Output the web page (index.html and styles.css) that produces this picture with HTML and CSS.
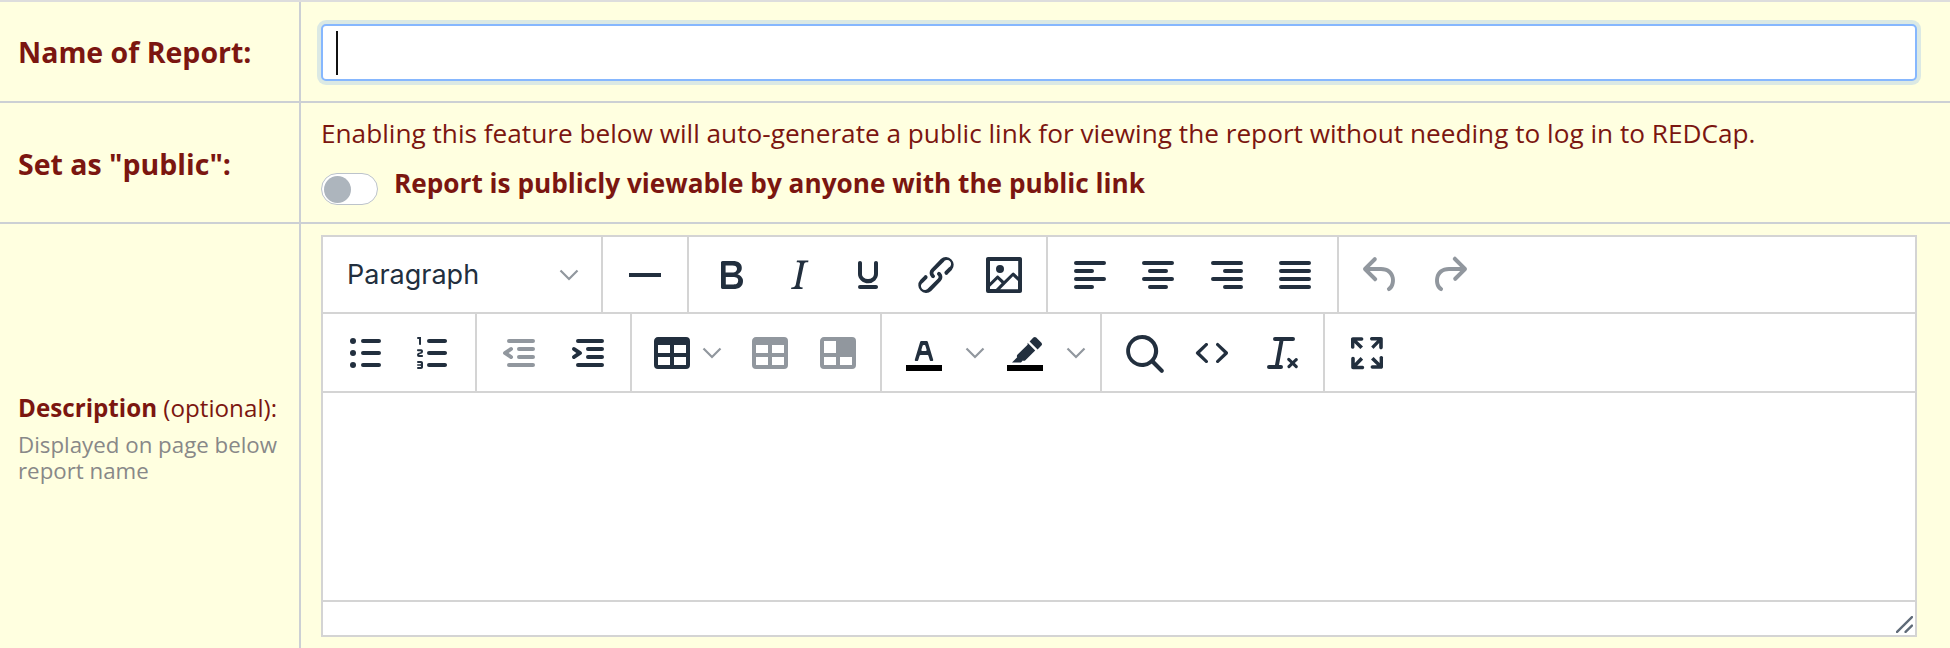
FILE: index.html
```html
<!DOCTYPE html>
<html lang="en">
<head>
  <meta charset="UTF-8">
  <title>Create Report</title>
  <link rel="stylesheet" href="styles.css">
</head>
<body>
  <svg class="sprite" xmlns="http://www.w3.org/2000/svg">
    <symbol id="i-hr" viewBox="0 0 24 24"><path d="M4 11h16v2H4z"/></symbol>
    <symbol id="i-bold" viewBox="0 0 24 24"><path d="M7.8 19c-.3 0-.5 0-.6-.2l-.2-.5V5.7c0-.2 0-.4.2-.5l.6-.2h5c1.5 0 2.7.3 3.5 1 .7.6 1.1 1.4 1.1 2.5a3 3 0 01-.6 1.9c-.4.6-1 1-1.6 1.2.4.1.9.3 1.3.6s.8.7 1 1.2c.4.4.5 1 .5 1.6 0 1.3-.4 2.3-1.3 3-.8.7-2.1 1-3.8 1H7.8zm5-8.3c.6 0 1.2-.1 1.6-.5.4-.3.6-.7.6-1.3 0-1.1-.8-1.7-2.3-1.7H9.3v3.5h3.4zm.5 6c.7 0 1.3-.1 1.7-.4.4-.4.6-.9.6-1.5s-.2-1-.7-1.4c-.4-.3-1-.4-2-.4H9.4v3.8h4z"/></symbol>
    <symbol id="i-italic" viewBox="0 0 24 24"><path d="M16.7 4.7l-.1.9h-.3c-.6 0-1 0-1.4.3-.3.3-.4.6-.5 1.1l-2.1 9.8v.6c0 .5.4.8 1.4.8h.2l-.2.8H8l.2-.8h.2c1.1 0 1.8-.5 2-1.5l2-9.8.1-.5c0-.6-.4-.8-1.4-.8h-.3l.2-.9h5.8z"/></symbol>
    <symbol id="i-underline" viewBox="0 0 24 24"><path d="M16 5c.6 0 1 .4 1 1v5.5a4 4 0 01-.4 1.8l-1 1.4a5.3 5.3 0 01-5.5 1 5 5 0 01-1.6-1c-.5-.4-.8-.9-1.1-1.4a4 4 0 01-.4-1.8V6c0-.6.4-1 1-1s1 .4 1 1v5.5c0 .3 0 .6.2 1l.6.7a3.3 3.3 0 002.2.8 3.4 3.4 0 002.2-.8c.3-.2.4-.5.6-.8l.2-.9V6c0-.6.4-1 1-1zM8 17h8c.6 0 1 .4 1 1s-.4 1-1 1H8a1 1 0 010-2z"/></symbol>
    <symbol id="i-link" viewBox="0 0 24 24"><path d="M6.2 12.3a1 1 0 011.4 1.4l-2 2a2 2 0 102.6 2.8l4.8-4.8a1 1 0 000-1.4 1 1 0 111.4-1.3 2.9 2.9 0 010 4L9.6 20a3.9 3.9 0 01-5.5-5.5l2-2zm11.6-.6a1 1 0 01-1.4-1.4l2-2a2 2 0 10-2.6-2.8L11 10.3a1 1 0 000 1.4A1 1 0 119.6 13a2.9 2.9 0 010-4L14.4 4a3.9 3.9 0 015.5 5.5l-2 2z"/></symbol>
    <symbol id="i-image" viewBox="0 0 24 24"><path fill-rule="evenodd" d="M5 15.7l3.3-3.2c.3-.3.7-.3 1 0L12 15l4.1-4c.3-.4.8-.4 1 0l2 1.9V5H5v10.7zM5 18V19h3l2.8-2.9-2-2L5 17.9zm14-3l-2.5-2.4-6.4 6.5H19v-4zM4 3h16c.6 0 1 .4 1 1v16c0 .6-.4 1-1 1H4a1 1 0 01-1-1V4c0-.6.4-1 1-1zm6 8a2 2 0 100-4 2 2 0 000 4z"/></symbol>
    <symbol id="i-left" viewBox="0 0 24 24"><path d="M5 5h14a1 1 0 010 2H5a1 1 0 110-2zm0 4h8a1 1 0 010 2H5a1 1 0 110-2zm0 8h8a1 1 0 010 2H5a1 1 0 010-2zm0-4h14a1 1 0 010 2H5a1 1 0 010-2z"/></symbol>
    <symbol id="i-center" viewBox="0 0 24 24"><path d="M5 5h14a1 1 0 010 2H5a1 1 0 110-2zm3 4h8a1 1 0 010 2H8a1 1 0 110-2zm0 8h8a1 1 0 010 2H8a1 1 0 010-2zm-3-4h14a1 1 0 010 2H5a1 1 0 010-2z"/></symbol>
    <symbol id="i-right" viewBox="0 0 24 24"><path d="M5 5h14a1 1 0 010 2H5a1 1 0 110-2zm6 4h8a1 1 0 010 2h-8a1 1 0 010-2zm0 8h8a1 1 0 010 2h-8a1 1 0 010-2zm-6-4h14a1 1 0 010 2H5a1 1 0 010-2z"/></symbol>
    <symbol id="i-justify" viewBox="0 0 24 24"><path d="M5 5h14a1 1 0 010 2H5a1 1 0 110-2zm0 4h14a1 1 0 010 2H5a1 1 0 110-2zm0 4h14a1 1 0 010 2H5a1 1 0 010-2zm0 4h14a1 1 0 010 2H5a1 1 0 010-2z"/></symbol>
    <symbol id="i-undo" viewBox="0 0 24 24"><path d="M6.4 8H12c3.7 0 6.2 2 6.8 5.1.6 2.7-.4 5.6-2.3 6.8a1 1 0 01-1-1.8c1.1-.6 1.8-2.7 1.4-4.6-.5-2.1-2.1-3.5-4.9-3.5H6.4l3.3 3.3a1 1 0 11-1.4 1.4l-5-5a1 1 0 010-1.4l5-5a1 1 0 011.4 1.4L6.4 8z"/></symbol>
    <symbol id="i-redo" viewBox="0 0 24 24"><path d="M17.6 10H12c-2.8 0-4.4 1.4-4.9 3.5-.4 2 .3 4 1.4 4.6a1 1 0 11-1 1.8c-2-1.2-2.9-4.1-2.3-6.8.6-3 3-5.1 6.8-5.1h5.6l-3.3-3.3a1 1 0 111.4-1.4l5 5a1 1 0 010 1.4l-5 5a1 1 0 01-1.4-1.4l3.3-3.3z"/></symbol>
    <symbol id="i-bullist" viewBox="0 0 24 24"><path d="M11 5h8a1 1 0 010 2h-8a1 1 0 010-2zm0 6h8a1 1 0 010 2h-8a1 1 0 010-2zm0 6h8a1 1 0 010 2h-8a1 1 0 010-2z"/><circle cx="6" cy="6" r="1.5"/><circle cx="6" cy="12" r="1.5"/><circle cx="6" cy="18" r="1.5"/></symbol>
    <symbol id="i-numlist" viewBox="0 0 24 24"><path d="M10 17h8c.6 0 1 .4 1 1s-.4 1-1 1h-8a1 1 0 010-2zm0-6h8c.6 0 1 .4 1 1s-.4 1-1 1h-8a1 1 0 010-2zm0-6h8c.6 0 1 .4 1 1s-.4 1-1 1h-8a1 1 0 110-2zM6 4v3.5c0 .3-.2.5-.5.5a.5.5 0 01-.5-.5V5h-.5a.5.5 0 010-1H6zm-1 8.8l.2.2h1.3c.3 0 .5.2.5.5s-.2.5-.5.5H4.9a1 1 0 01-.9-1V13c0-.4.3-.8.6-1l1.2-.4.2-.3a.2.2 0 00-.2-.2H4.5a.5.5 0 01-.5-.5c0-.3.2-.5.5-.5h1.6c.5 0 .9.4.9 1v.1c0 .4-.3.8-.6 1l-1.2.4-.2.3zM7 17v2c0 .6-.4 1-1 1H4.5a.5.5 0 010-1h1.2c.2 0 .3-.1.3-.3 0-.2-.1-.3-.3-.3H4.4a.4.4 0 110-.8h1.3c.2 0 .3-.1.3-.3 0-.2-.1-.3-.3-.3H4.5a.5.5 0 110-1H6c.6 0 1 .4 1 1z"/></symbol>
    <symbol id="i-outdent" viewBox="0 0 24 24"><path d="M7 5h12a1 1 0 010 2H7a1 1 0 110-2zm5 4h7a1 1 0 010 2h-7a1 1 0 010-2zm0 4h7a1 1 0 010 2h-7a1 1 0 010-2zm-5 4h12a1 1 0 010 2H7a1 1 0 010-2zm1.6-3.8a1 1 0 01-1.2 1.6l-3-2a1 1 0 010-1.6l3-2a1 1 0 011.2 1.6L6.8 12l1.8 1.2z"/></symbol>
    <symbol id="i-indent" viewBox="0 0 24 24"><path d="M7 5h12a1 1 0 010 2H7a1 1 0 110-2zm5 4h7a1 1 0 010 2h-7a1 1 0 010-2zm0 4h7a1 1 0 010 2h-7a1 1 0 010-2zm-5 4h12a1 1 0 010 2H7a1 1 0 010-2zm-2.6-3.8L6.2 12l-1.8-1.2a1 1 0 011.2-1.6l3 2a1 1 0 010 1.6l-3 2a1 1 0 11-1.2-1.6z"/></symbol>
    <symbol id="i-table" viewBox="0 0 24 24"><path fill-rule="evenodd" d="M19 4a2 2 0 012 2v12a2 2 0 01-2 2H5a2 2 0 01-2-2V6c0-1.1.9-2 2-2h14zM5 14v4h6v-4H5zm14 0h-6v4h6v-4zm0-6h-6v4h6V8zM5 12h6V8H5v4z"/></symbol>
    <symbol id="i-tablecell" viewBox="0 0 24 24"><path fill-rule="evenodd" d="M19 4a2 2 0 012 2v12a2 2 0 01-2 2H5a2 2 0 01-2-2V6c0-1.1.9-2 2-2h14zM5 14v4h6v-4H5zm14 0h-6v4h6v-4zM5 12h6V6H5v6z"/></symbol>
    <symbol id="i-forecolor" viewBox="0 0 24 24"><path fill-rule="evenodd" d="M8.7 16h-.8a.5.5 0 01-.5-.6l2.7-9c.1-.3.3-.4.5-.4h2.8c.2 0 .4.1.5.4l2.7 9a.5.5 0 01-.5.6h-.8a.5.5 0 01-.4-.4l-.7-2.2c0-.3-.3-.4-.5-.4h-3.4c-.2 0-.4.1-.5.4l-.7 2.2c0 .3-.2.4-.4.4zm2.6-7.6l-.6 2a.5.5 0 00.5.6h1.6a.5.5 0 00.5-.6l-.6-2c0-.3-.3-.4-.5-.4h-.4c-.2 0-.4.1-.5.4z"/><path class="swatch" d="M3 18h18v3H3z"/></symbol>
    <symbol id="i-backcolor" viewBox="0 0 24 24"><path d="M17.6 4.3l2.6 2.6c.4.4.4 1 0 1.4l-1.9 1.9-4-4 1.9-1.9c.4-.4 1-.4 1.4 0zM13.3 6.9l3.8 3.8-4.9 4.9c-.4.4-.9.4-1.3.2l-.9.9H5.5l2.6-2.6c-.3-.4-.2-.9.2-1.3l5-4.9z"/><path class="swatch" d="M3 18h18v3H3z"/></symbol>
    <symbol id="i-search" viewBox="0 0 24 24"><path fill-rule="evenodd" d="M16 17.3a8 8 0 111.4-1.4l4.3 4.4a1 1 0 01-1.4 1.4l-4.4-4.3zm-5-.3a6 6 0 100-12 6 6 0 000 12z"/></symbol>
    <symbol id="i-code" viewBox="0 0 24 24"><path d="M9.8 15.7c.3.3.3.8 0 1-.3.4-.9.4-1.2 0l-4.4-4.1a.8.8 0 010-1.2l4.4-4.2c.3-.3.9-.3 1.2 0 .3.3.3.8 0 1.1L6 12l3.8 3.7zM14.2 15.7c-.3.3-.3.8 0 1 .4.4.9.4 1.2 0l4.4-4.1c.3-.3.3-.9 0-1.2l-4.4-4.2a.8.8 0 00-1.2 0c-.3.3-.3.8 0 1.1L18 12l-3.8 3.7z"/></symbol>
    <symbol id="i-clear" viewBox="0 0 24 24"><path d="M13.2 6l-2.2 12h1a1 1 0 010 2H6a1 1 0 010-2h3l2.2-12H9a1 1 0 110-2h9a1 1 0 010 2h-4.8z"/><path d="M15.3 14.6a.8.8 0 011.1 0l1.4 1.4 1.4-1.4a.8.8 0 011.1 1.1L18.9 17l1.4 1.4a.8.8 0 01-1.1 1.1l-1.4-1.4-1.4 1.4a.8.8 0 01-1.1-1.1l1.4-1.4-1.4-1.3a.8.8 0 010-1.1z"/></symbol>
    <symbol id="i-full" viewBox="0 0 24 24"><path d="M15.3 10l-1.2-1.3 2.9-3h-2.3a.9.9 0 110-1.7H19c.5 0 .9.4.9.9v4.4a.9.9 0 11-1.8 0V7l-2.9 3zm0 4l3 3v-2.3a.9.9 0 111.7 0V19c0 .5-.4.9-.9.9h-4.4a.9.9 0 110-1.8H17l-3-2.9 1.3-1.2zM10 15.4l-2.9 3h2.3a.9.9 0 110 1.7H5a.9.9 0 01-.9-.9v-4.4a.9.9 0 111.8 0V17l2.9-3 1.2 1.3zM8.7 10L5.7 7v2.3a.9.9 0 01-1.7 0V5c0-.5.4-.9.9-.9h4.4a.9.9 0 010 1.8H7l3 2.9-1.3 1.2z"/></symbol>
    <symbol id="i-chevron" viewBox="0 0 20 12"><path d="M1.5 1.5L10 10l8.5-8.5" fill="none" stroke="currentColor" stroke-width="2.2"/></symbol>
  </svg>

  <main class="report-form">
    <div class="form-row row-name">
      <div class="form-label">Name of Report:</div>
      <div class="form-field">
        <div class="text-input"><span class="caret"></span></div>
      </div>
    </div>

    <div class="form-row row-public">
      <div class="form-label">Set as "public":</div>
      <div class="form-field">
        <div class="public-note">Enabling this feature below will auto-generate a public link for viewing the report without needing to log in to REDCap.</div>
        <div class="public-switch">
          <span class="switch"><span class="knob"></span></span>
          <span class="switch-label">Report is publicly viewable by anyone with the public link</span>
        </div>
      </div>
    </div>

    <div class="form-row row-desc">
      <div class="form-label label-desc">
        <div class="desc-title"><b>Description</b> (optional):</div>
        <div class="desc-hint">Displayed on page below report name</div>
      </div>
      <div class="form-field">
        <div class="editor">
          <div class="toolbar">
            <div class="tb-group group-blocks">
              <div class="blocks-select"><span>Paragraph</span><svg class="chev"><use href="#i-chevron"/></svg></div>
            </div>
            <div class="tb-group">
              <span class="btn"><svg class="ico"><use href="#i-hr"/></svg></span>
            </div>
            <div class="tb-group">
              <span class="btn"><svg class="ico"><use href="#i-bold"/></svg></span>
              <span class="btn"><svg class="ico"><use href="#i-italic"/></svg></span>
              <span class="btn"><svg class="ico"><use href="#i-underline"/></svg></span>
              <span class="btn"><svg class="ico"><use href="#i-link"/></svg></span>
              <span class="btn"><svg class="ico"><use href="#i-image"/></svg></span>
            </div>
            <div class="tb-group">
              <span class="btn"><svg class="ico"><use href="#i-left"/></svg></span>
              <span class="btn"><svg class="ico"><use href="#i-center"/></svg></span>
              <span class="btn"><svg class="ico"><use href="#i-right"/></svg></span>
              <span class="btn"><svg class="ico"><use href="#i-justify"/></svg></span>
            </div>
            <div class="tb-group last">
              <span class="btn off"><svg class="ico"><use href="#i-undo"/></svg></span>
              <span class="btn off"><svg class="ico"><use href="#i-redo"/></svg></span>
            </div>
          </div>
          <div class="toolbar">
            <div class="tb-group">
              <span class="btn"><svg class="ico"><use href="#i-bullist"/></svg></span>
              <span class="btn"><svg class="ico"><use href="#i-numlist"/></svg></span>
            </div>
            <div class="tb-group">
              <span class="btn off"><svg class="ico"><use href="#i-outdent"/></svg></span>
              <span class="btn"><svg class="ico"><use href="#i-indent"/></svg></span>
            </div>
            <div class="tb-group">
              <span class="split split-table"><svg class="ico"><use href="#i-table"/></svg><svg class="chev"><use href="#i-chevron"/></svg></span>
              <span class="btn off"><svg class="ico"><use href="#i-table"/></svg></span>
              <span class="btn off"><svg class="ico"><use href="#i-tablecell"/></svg></span>
            </div>
            <div class="tb-group">
              <span class="split"><svg class="ico"><use href="#i-forecolor"/></svg><svg class="chev"><use href="#i-chevron"/></svg></span>
              <span class="split"><svg class="ico"><use href="#i-backcolor"/></svg><svg class="chev"><use href="#i-chevron"/></svg></span>
            </div>
            <div class="tb-group">
              <span class="btn"><svg class="ico"><use href="#i-search"/></svg></span>
              <span class="btn"><svg class="ico"><use href="#i-code"/></svg></span>
              <span class="btn"><svg class="ico"><use href="#i-clear"/></svg></span>
            </div>
            <div class="tb-group last">
              <span class="btn"><svg class="ico"><use href="#i-full"/></svg></span>
            </div>
          </div>
          <div class="edit-area"></div>
          <div class="statusbar">
            <svg class="grip" viewBox="0 0 16 16"><path d="M1 15L15 1M9 15l6-6" fill="none" stroke="#5f6b78" stroke-width="2.2" stroke-linecap="round"/></svg>
          </div>
        </div>
      </div>
    </div>
  </main>
</body>
</html>
```

FILE: styles.css
```css
html, body {
  height: 100%;
}

body {
  margin: 0;
  overflow: hidden;
  font-family: "Open Sans", Arial, sans-serif;
  color: #7b1610;
  background-color: #ffffe0;
}

.sprite {
  display: none;
}

.report-form {
  display: flex;
  flex-direction: column;
  height: 100%;
  border-top: 2px solid #ddd;
  box-sizing: border-box;
}

.form-row {
  display: grid;
  grid-template-columns: 301px 1fr;
  border-bottom: 2px solid #ccd0d4;
}

.row-name {
  height: 101px;
  box-sizing: border-box;
}

.row-public {
  height: 121px;
  box-sizing: border-box;
}

.row-public .form-label {
  padding-top: 3px;
}

.row-desc {
  flex: 1;
  border-bottom: none;
}

.form-label {
  display: flex;
  align-items: center;
  padding-left: 18px;
  box-sizing: border-box;
  font-size: 28.5px;
  font-weight: 700;
  border-right: 2px solid #ccd0d4;
}

.label-desc {
  display: block;
  padding-top: 168px;
  padding-right: 10px;
}

.desc-title {
  font-size: 24.2px;
  font-weight: 400;
  line-height: 32px;
  white-space: nowrap;
}

.desc-hint {
  margin-top: 8px;
  font-size: 22.3px;
  font-weight: 400;
  line-height: 26px;
  color: #888;
}

.form-field {
  padding: 0 33px 0 20px;
  min-width: 0;
}

.row-name .form-field {
  display: flex;
  align-items: center;
  padding-top: 2px;
}

/* focused input, caret drawn as a bar */
.text-input {
  display: flex;
  align-items: center;
  width: 100%;
  height: 57px;
  padding-left: 13px;
  box-sizing: border-box;
  background-color: #fff;
  border: 2px solid #86b7fe;
  border-radius: 5px;
  box-shadow: 0 0 0 4px rgba(13, 110, 253, 0.15);
}

.caret {
  width: 2px;
  height: 44px;
  background-color: #111;
}

.public-note {
  margin-top: 15px;
  font-size: 26.2px;
  line-height: 30px;
  white-space: nowrap;
}

.public-switch {
  display: flex;
  align-items: center;
  gap: 16px;
  margin-top: 17px;
}

.switch {
  display: flex;
  align-items: center;
  width: 57px;
  height: 32px;
  padding-left: 2px;
  box-sizing: border-box;
  background-color: #fff;
  border: 1px solid #bcc3cb;
  border-radius: 16px;
}

.knob {
  width: 27px;
  height: 27px;
  background-color: #adb5bd;
  border-radius: 50%;
}

.switch-label {
  margin-bottom: 12px;
  font-size: 26.2px;
  font-weight: 700;
}

/* editor */
.editor {
  display: flex;
  flex-direction: column;
  height: 402px;
  margin-top: 11px;
  background-color: #fff;
  border: 2px solid #d4d4d4;
  box-sizing: border-box;
  color: #222f3e;
}

.toolbar {
  display: flex;
  height: 77px;
  flex: none;
  border-bottom: 2px solid #d4d4d4;
  box-sizing: border-box;
}

.toolbar + .toolbar {
  height: 79px;
}

.tb-group {
  display: flex;
  align-items: center;
  padding: 0 8px;
  border-right: 2px solid #d4d4d4;
}

.tb-group.last {
  border-right: none;
}

.group-blocks {
  width: 280px;
  padding: 0 22px 0 24px;
  box-sizing: border-box;
}

.blocks-select {
  display: flex;
  align-items: center;
  justify-content: space-between;
  width: 100%;
  font-family: Inter, "Liberation Sans", sans-serif;
  font-size: 27px;
}

.btn {
  display: flex;
  align-items: center;
  justify-content: center;
  width: 68.2px;
}

.split {
  display: flex;
  align-items: center;
  width: 101px;
  padding-left: 10px;
  box-sizing: border-box;
}

.split-table {
  width: 96px;
  padding-left: 8px;
}

.ico {
  display: block;
  flex: none;
  width: 48px;
  height: 48px;
  fill: #222f3e;
}

.off .ico {
  fill: #91979e;
}

.swatch {
  fill: #000;
}

.chev {
  flex: none;
  display: block;
  width: 20px;
  height: 12px;
  color: #91979e;
}

.split .chev {
  margin-left: 17px;
}

.split-table .chev {
  margin-left: 6px;
}

.edit-area {
  flex: 1;
}

.statusbar {
  display: flex;
  align-items: flex-end;
  justify-content: flex-end;
  height: 35px;
  flex: none;
  padding: 0 2px 2px 0;
  box-sizing: border-box;
  border-top: 2px solid #d4d4d4;
}

.grip {
  display: block;
  width: 17px;
  height: 17px;
}
```
